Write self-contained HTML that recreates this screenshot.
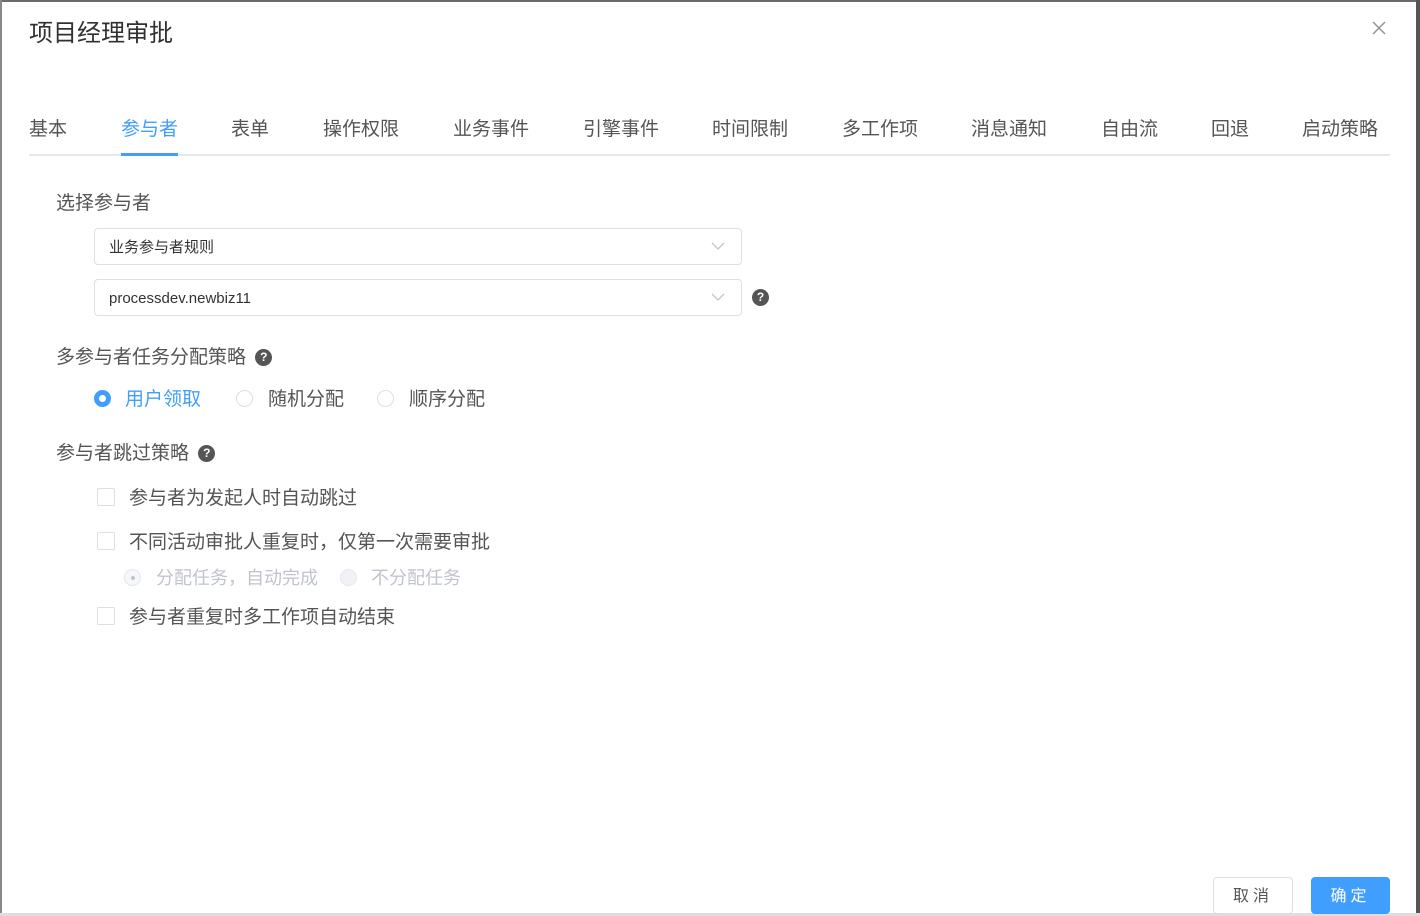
<!DOCTYPE html>
<html><head><meta charset="utf-8"><style>
body{margin:0;width:1420px;height:916px;overflow:hidden;background:#fff;font-family:"Liberation Sans","Noto Sans CJK SC",sans-serif;position:relative;color:#606266}
.a{position:absolute;white-space:nowrap}
.tab{position:absolute;top:118px;font-size:19px;color:#555;line-height:24px}
.sel{position:absolute;left:94px;width:648px;height:37px;border:1px solid #dcdfe6;border-radius:4px;box-sizing:border-box;font-size:15px;color:#333;line-height:37px;padding-left:14px}
.sel svg{position:absolute;right:16px;top:13px}
.q{display:inline-block;width:17px;height:17px;border-radius:50%;background:#555;color:#fff;font-size:12px;font-weight:bold;text-align:center;line-height:17px;vertical-align:middle;margin-left:4px}
.rad{position:absolute;width:17px;height:17px;border:1px solid #dcdfe6;border-radius:50%;box-sizing:border-box;background:#fff}
.cb{position:absolute;left:97px;width:18px;height:18px;border:1px solid #dcdfe6;border-radius:2px;box-sizing:border-box}
.lbl{font-size:19px;color:#555}
</style></head><body>
<div class="a" style="left:0;top:0;width:1420px;height:2px;background:#6b6b6b"></div>
<div class="a" style="left:0;top:0;width:2px;height:916px;background:#888"></div>
<div class="a" style="left:1416px;top:0;width:4px;height:916px;background:#555"></div>
<div class="a" style="left:0;top:913px;width:1420px;height:3px;background:#ddd"></div>
<div class="a" style="left:29px;top:13px;font-size:24px;color:#303133">项目经理审批</div>
<svg class="a" style="left:1372px;top:21px" width="14" height="14"><path d="M1 1L13 13M13 1L1 13" stroke="#909399" stroke-width="1.5"/></svg>
<div class="tab" style="left:29px">基本</div>
<div class="tab" style="left:121px;color:#409eff">参与者</div>
<div class="tab" style="left:231px">表单</div>
<div class="tab" style="left:323px">操作权限</div>
<div class="tab" style="left:453px">业务事件</div>
<div class="tab" style="left:583px">引擎事件</div>
<div class="tab" style="left:712px">时间限制</div>
<div class="tab" style="left:842px">多工作项</div>
<div class="tab" style="left:971px">消息通知</div>
<div class="tab" style="left:1101px">自由流</div>
<div class="tab" style="left:1211px">回退</div>
<div class="tab" style="left:1302px">启动策略</div>
<div class="a" style="left:29px;top:154px;width:1361px;height:2px;background:#e4e7ed"></div>
<div class="a" style="left:121px;top:153px;width:57px;height:3px;background:#409eff"></div>
<div class="a lbl" style="left:56px;top:188px">选择参与者</div>
<div class="sel" style="top:228px">业务参与者规则<svg width="14" height="9"><path d="M1 1L7 7L13 1" stroke="#c0c4cc" fill="none" stroke-width="1.3"/></svg></div>
<div class="sel" style="top:279px">processdev.newbiz11<svg width="14" height="9"><path d="M1 1L7 7L13 1" stroke="#c0c4cc" fill="none" stroke-width="1.3"/></svg></div>
<div class="a" style="left:752px;top:289px"><span class="q" style="margin:0">?</span></div>
<div class="a lbl" style="left:56px;top:342px">多参与者任务分配策略 <span class="q">?</span></div>
<div class="rad" style="left:94px;top:390px;border:5px solid #409eff"></div>
<div class="a" style="left:125px;top:384px;font-size:19px;color:#409eff">用户领取</div>
<div class="rad" style="left:236px;top:390px"></div>
<div class="a lbl" style="left:268px;top:384px">随机分配</div>
<div class="rad" style="left:377px;top:390px"></div>
<div class="a lbl" style="left:409px;top:384px">顺序分配</div>
<div class="a lbl" style="left:56px;top:438px">参与者跳过策略 <span class="q">?</span></div>
<div class="cb" style="top:488px"></div>
<div class="a lbl" style="left:129px;top:483px">参与者为发起人时自动跳过</div>
<div class="cb" style="top:532px"></div>
<div class="a lbl" style="left:129px;top:527px">不同活动审批人重复时，仅第一次需要审批</div>
<div class="rad" style="left:124px;top:569px;background:#f5f7fa;border-color:#e4e7ed"><div style="width:4px;height:4px;background:#c0c4cc;border-radius:50%;margin:5.5px"></div></div>
<div class="a" style="left:156px;top:564px;font-size:18px;color:#c0c4cc">分配任务，自动完成</div>
<div class="rad" style="left:340px;top:569px;background:#f0f2f5;border-color:#e4e7ed"></div>
<div class="a" style="left:371px;top:564px;font-size:18px;color:#c0c4cc">不分配任务</div>
<div class="cb" style="top:607px"></div>
<div class="a lbl" style="left:129px;top:602px">参与者重复时多工作项自动结束</div>
<div class="a" style="left:1213px;top:877px;width:80px;height:37px;border:1px solid #dcdfe6;border-radius:4px;box-sizing:border-box;text-align:center;line-height:37px;font-size:16px;color:#555;letter-spacing:4px">取消</div>
<div class="a" style="left:1311px;top:877px;width:79px;height:37px;background:#409eff;border-radius:4px;text-align:center;line-height:39px;font-size:16px;color:#fff;letter-spacing:4px">确定</div>
</body></html>
